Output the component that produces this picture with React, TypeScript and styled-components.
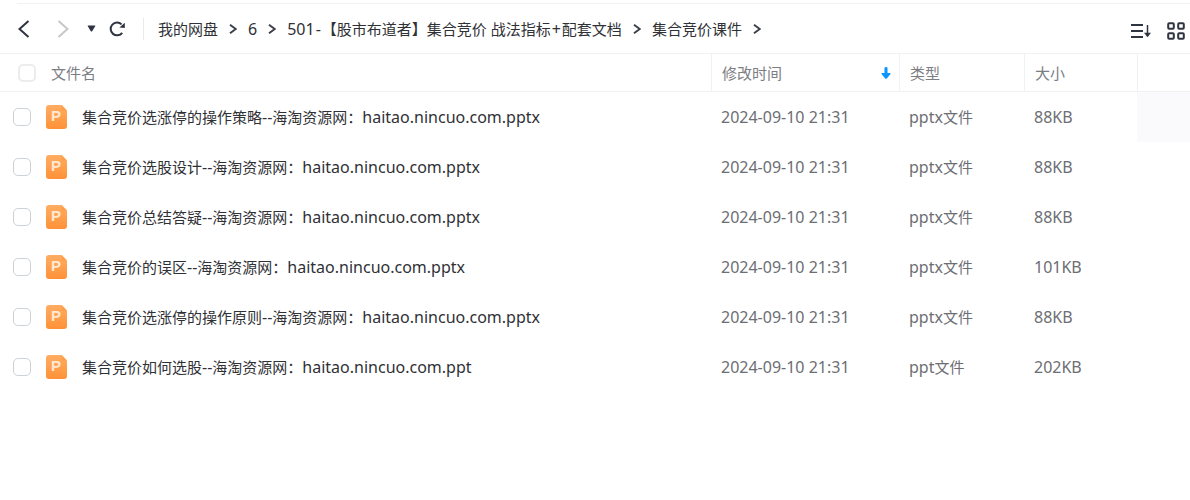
import React from "react";
import styled, { createGlobalStyle } from "styled-components";

const GlobalStyle = createGlobalStyle`
  * { box-sizing: border-box; }
  body {
    margin: 0;
    background: #fff;
    color: #303136;
    font: 15px/20px "Noto Sans", "Noto Sans CJK SC", sans-serif;
  }
`;

const Page = styled.main`
  padding-top: 3px;
`;

const Toolbar = styled.header`
  display: flex;
  align-items: center;
  height: 50px;
  margin-left: 17px;
  padding-right: 5px;
  border-top: 1px solid #f1f2f4;
`;

const IconButton = styled.button<{ $width: number; $gap?: number }>`
  display: flex;
  align-items: center;
  justify-content: center;
  flex: none;
  width: ${(p) => p.$width}px;
  height: 24px;
  margin: 0 ${(p) => p.$gap ?? 0}px 0 0;
  padding: 0;
  border: 0;
  background: none;
  color: #2f3441;
  cursor: pointer;

  &:disabled {
    color: #c6c7ca;
    cursor: default;
  }
`;

const Crumbs = styled.nav`
  display: flex;
  align-items: center;
  gap: 11px;
  flex: 1;
  min-width: 0;
  height: 22px;
  padding-left: 14px;
  border-left: 1px solid #e9eaec;
  white-space: nowrap;
`;

const Crumb = styled.a`
  color: inherit;
  text-decoration: none;
`;

const Tools = styled.div`
  display: flex;
  gap: 16px;
  padding-top: 4px;
`;

const Latin = styled.span`
  font-size: 16px;
`;

const Sign = styled(Latin)`
  padding: 0 1px;
`;

const FileTable = styled.table`
  width: 100%;
  table-layout: fixed;
  border-collapse: separate;
  border-spacing: 0;
`;

const Column = styled.col<{ $width?: number }>`
  width: ${(p) => (p.$width ? `${p.$width}px` : "auto")};
`;

const HeadCell = styled.th<{ $divided?: boolean }>`
  height: 39px;
  padding: 0 8px 0 ${(p) => (p.$divided ? 10 : 18)}px;
  border: solid #f0f1f3;
  border-width: 1px 0 1px ${(p) => (p.$divided ? 1 : 0)}px;
  color: #7c7e84;
  font-weight: 400;
  text-align: left;
`;

const HeadLine = styled.div<{ $spread?: boolean }>`
  display: flex;
  align-items: center;
  justify-content: ${(p) => (p.$spread ? "space-between" : "flex-start")};
  gap: 15px;
`;

const Cell = styled.td<{ $shaded?: boolean }>`
  height: 50px;
  padding: 0 0 0 10px;
  background: ${(p) => (p.$shaded ? "#fafafd" : "transparent")};
  color: #6c6e73;
  white-space: nowrap;
`;

const FileLabel = styled.label`
  display: flex;
  align-items: center;
  gap: 15px;
  padding-left: 3px;
  color: #303136;
`;

const Checkbox = styled.input<{ $thick?: boolean }>`
  appearance: none;
  flex: none;
  width: 18px;
  height: 18px;
  margin: 0;
  border: ${(p) => (p.$thick ? "2px solid #ebecee" : "1px solid #cdd2d9")};
  border-radius: 5px;
  background: #fff;

  &:checked {
    border-color: #0a95ff;
    background: #0a95ff;
  }
`;

const Chevron = () => (
  <svg width="8" height="10" viewBox="0 0 8 10" fill="none" stroke="#3b3f4a" strokeWidth="2" aria-hidden="true">
    <path d="M1 .8 6.8 5 1 9.2" />
  </svg>
);

const SlideIcon = () => (
  <svg width="21" height="24" viewBox="0 0 21 24" aria-hidden="true">
    <defs>
      <linearGradient id="slide" x1="0" y1="0" x2="0" y2="1">
        <stop offset="0" stopColor="#ffad63" />
        <stop offset="1" stopColor="#ff9138" />
      </linearGradient>
    </defs>
    <path d="M3 0h12.5L21 5.5V21a3 3 0 0 1-3 3H3a3 3 0 0 1-3-3V3a3 3 0 0 1 3-3z" fill="url(#slide)" />
    <path d="M15.5 0 21 5.5h-4a1.5 1.5 0 0 1-1.5-1.5z" fill="#ff9d4b" />
    <text x="10" y="16" textAnchor="middle" fontFamily="Liberation Sans, sans-serif" fontSize="15" fontWeight="700" fill="#ffe9d2">
      P
    </text>
  </svg>
);

const crumbs: React.ReactNode[] = [
  "我的网盘",
  <Latin>6</Latin>,
  <>
    <Latin>501</Latin>
    <Sign>-</Sign>【股市布道者】集合竞价 战法指标<Sign>+</Sign>配套文档
  </>,
  "集合竞价课件",
];

const files = [
  { title: "集合竞价选涨停的操作策略", ext: "pptx", size: "88KB" },
  { title: "集合竞价选股设计", ext: "pptx", size: "88KB" },
  { title: "集合竞价总结答疑", ext: "pptx", size: "88KB" },
  { title: "集合竞价的误区", ext: "pptx", size: "101KB" },
  { title: "集合竞价选涨停的操作原则", ext: "pptx", size: "88KB" },
  { title: "集合竞价如何选股", ext: "ppt", size: "202KB" },
];

export default function App() {
  return (
    <Page>
      <GlobalStyle />
      <Toolbar>
        <IconButton $width={14} $gap={25} aria-label="后退">
          <svg width="14" height="18" viewBox="0 0 14 18" fill="none" stroke="currentColor" strokeWidth="2">
            <path d="M11.5 1 2.5 9l9 8" />
          </svg>
        </IconButton>
        <IconButton $width={14} $gap={17} aria-label="前进" disabled>
          <svg width="14" height="18" viewBox="0 0 14 18" fill="none" stroke="currentColor" strokeWidth="2">
            <path d="M2.5 1l9 8-9 8" />
          </svg>
        </IconButton>
        <IconButton $width={9} $gap={12} aria-label="历史记录">
          <svg width="9" height="7" viewBox="0 0 9 7">
            <path d="M1 .5h7q.7 0 .3.6L5.2 6.2q-.7.8-1.4 0L.7 1.1Q.3.5 1 .5z" fill="currentColor" />
          </svg>
        </IconButton>
        <IconButton $width={18} $gap={17} aria-label="刷新">
          <svg width="18" height="16" viewBox="0 0 18 16" fill="none">
            <path d="M14.2 11.8A6.4 6.4 0 1 1 13.6 3.4" stroke="currentColor" strokeWidth="2" />
            <path d="M16.8 1.8v5.2l-5.4-.6z" fill="currentColor" />
          </svg>
        </IconButton>
        <Crumbs aria-label="路径">
          {crumbs.map((crumb, i) => (
            <React.Fragment key={i}>
              <Crumb href="#">{crumb}</Crumb>
              <Chevron />
            </React.Fragment>
          ))}
        </Crumbs>
        <Tools>
          <IconButton $width={20} aria-label="排序">
            <svg width="20" height="14" viewBox="0 0 20 14" fill="none" stroke="currentColor" strokeWidth="2">
              <path d="M0 1h12M0 7h12M0 13h12" />
              <path d="M16.5 1v11" strokeWidth="1.5" />
              <path d="M13 8.8h7l-3.5 4.4z" fill="currentColor" stroke="none" />
            </svg>
          </IconButton>
          <IconButton $width={18} aria-label="网格视图">
            <svg width="18" height="18" viewBox="0 0 18 18" fill="none" stroke="currentColor" strokeWidth="2">
              <rect x="1.2" y="1.2" width="5.6" height="5.6" rx="1" />
              <rect x="11.2" y="1.2" width="5.6" height="5.6" rx="1" />
              <rect x="1.2" y="11.2" width="5.6" height="5.6" rx="1" />
              <rect x="11.2" y="11.2" width="5.6" height="5.6" rx="1" />
            </svg>
          </IconButton>
        </Tools>
      </Toolbar>
      <FileTable>
        <colgroup>
          <Column />
          <Column $width={188} />
          <Column $width={125} />
          <Column $width={113} />
          <Column $width={53} />
        </colgroup>
        <thead>
          <tr>
            <HeadCell>
              <HeadLine>
                <Checkbox type="checkbox" $thick aria-label="全选" />
                文件名
              </HeadLine>
            </HeadCell>
            <HeadCell $divided>
              <HeadLine $spread>
                修改时间
                <svg width="10" height="12" viewBox="0 0 10 12" fill="#0a95ff" aria-hidden="true">
                  <path d="M3.5 1q0-1 1.5-1t1.5 1v5H9q1 .3.3 1.2L5.8 11.4q-.8.9-1.6 0L.7 7.2Q0 6.3 1 6h2.5z" />
                </svg>
              </HeadLine>
            </HeadCell>
            <HeadCell $divided>类型</HeadCell>
            <HeadCell $divided>大小</HeadCell>
            <HeadCell $divided />
          </tr>
        </thead>
        <tbody>
          {files.map((file, i) => (
            <tr key={file.title}>
              <Cell>
                <FileLabel>
                  <Checkbox type="checkbox" />
                  <SlideIcon />
                  <span>
                    {file.title}
                    <Latin>--</Latin>海淘资源网：<Latin>haitao.nincuo.com.{file.ext}</Latin>
                  </span>
                </FileLabel>
              </Cell>
              <Cell>
                <Latin>2024-09-10 21:31</Latin>
              </Cell>
              <Cell>
                <Latin>{file.ext}</Latin>文件
              </Cell>
              <Cell>
                <Latin>{file.size}</Latin>
              </Cell>
              <Cell $shaded={i === 0} />
            </tr>
          ))}
        </tbody>
      </FileTable>
    </Page>
  );
}
